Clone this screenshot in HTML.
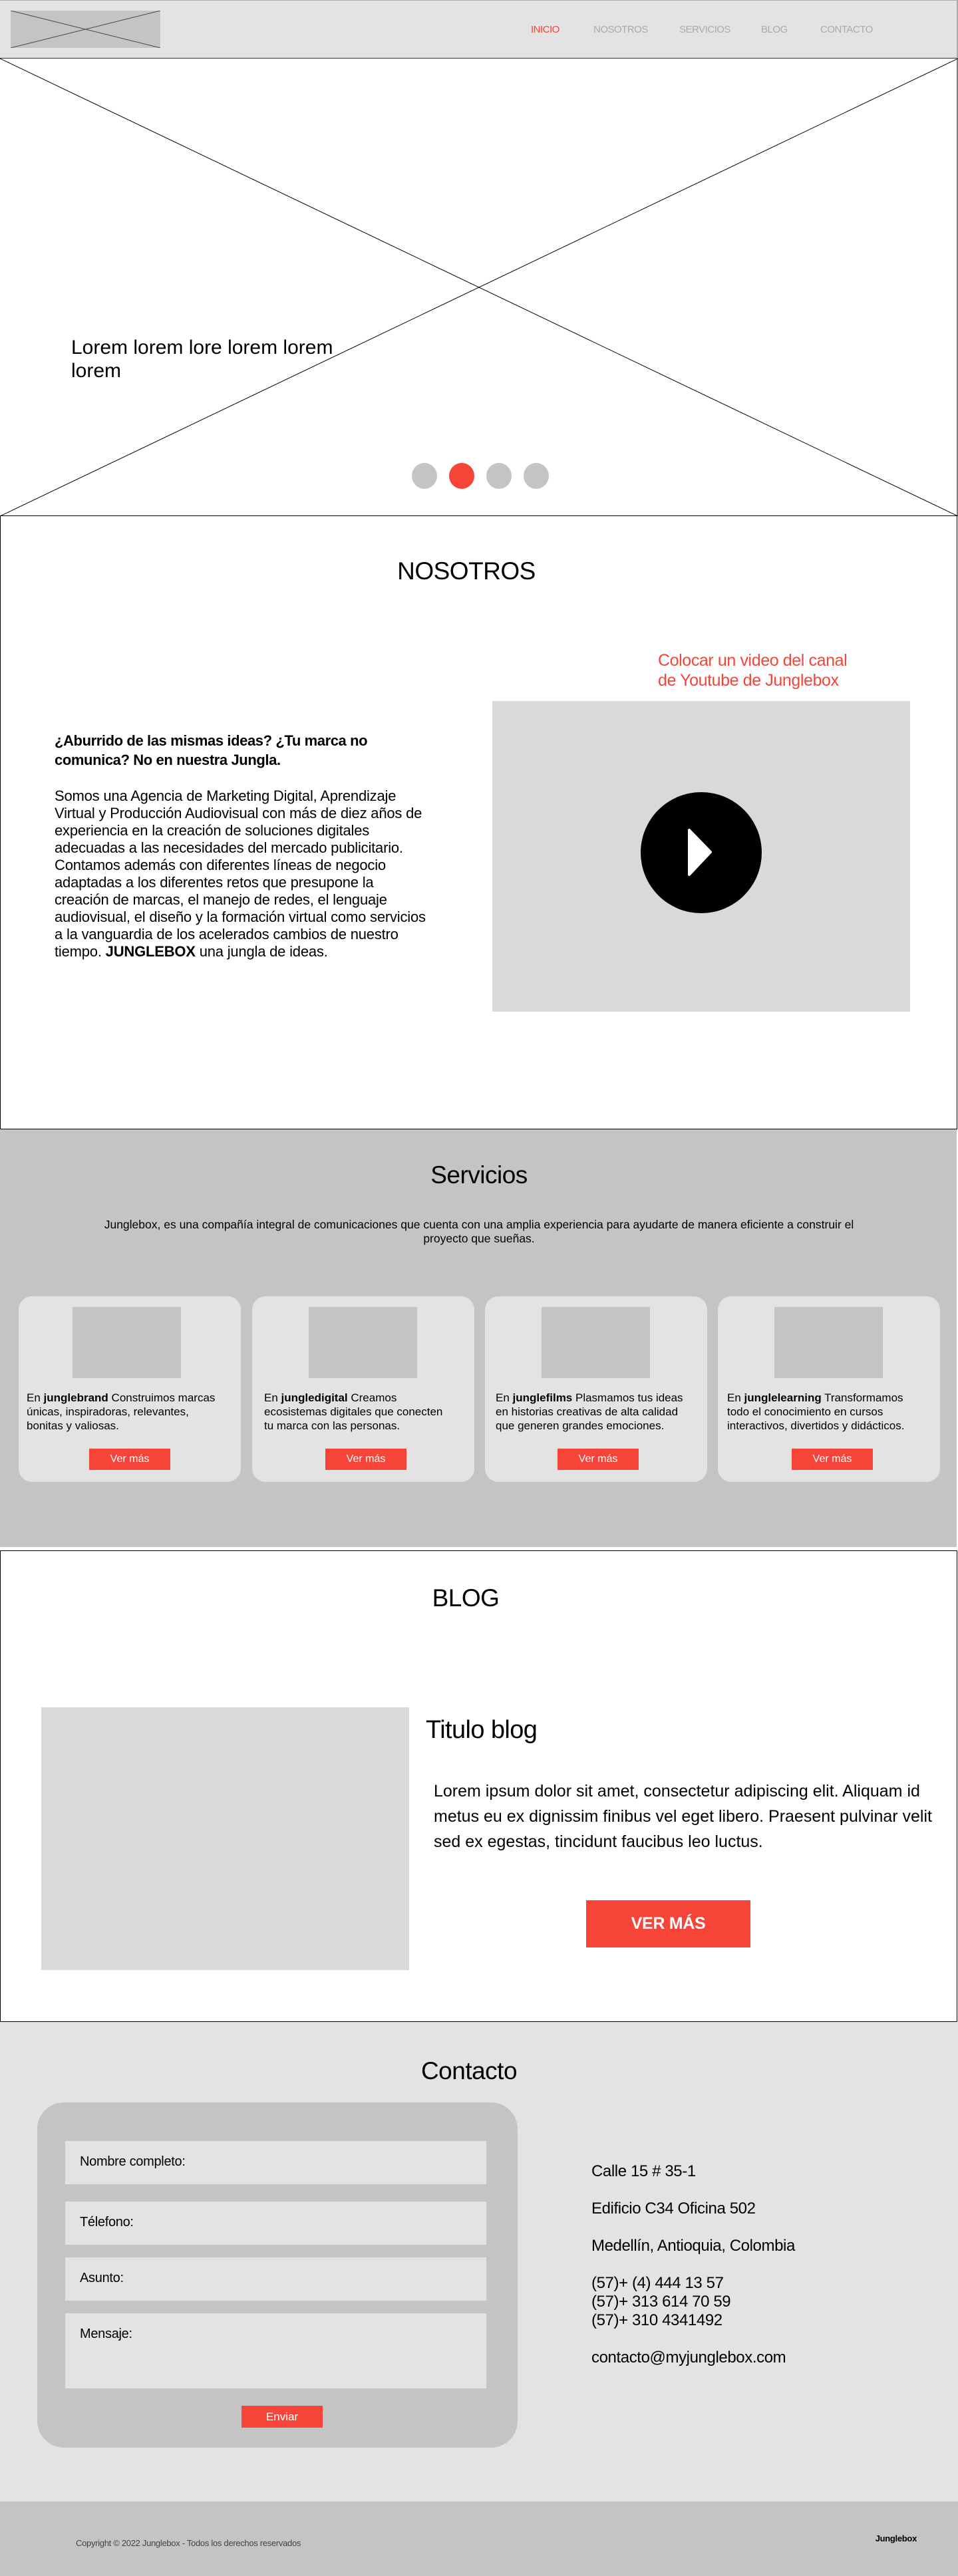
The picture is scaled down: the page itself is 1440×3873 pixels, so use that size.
<!DOCTYPE html>
<html><head><meta charset="utf-8"><style>
*{margin:0;padding:0;box-sizing:border-box}
body{width:1440px;height:3873px;position:relative;background:#fff;font-family:"Liberation Sans",sans-serif;color:#000;overflow:hidden}
.a{position:absolute}
.nw{white-space:nowrap}
.red{background:#f64438;color:#fff;text-align:center}
</style></head><body>
<!-- header -->
<div class="a" style="left:0;top:0;width:1440px;height:88px;background:#e3e3e3;border-top:1px solid #aaa;border-right:2px solid #aaa;border-bottom:1px solid #333"></div>
<svg class="a" style="left:16px;top:16px" width="225" height="56"><rect x="0" y="0" width="225" height="56" fill="#c4c4c4"/><line x1="0" y1="0" x2="225" y2="56" stroke="#444" stroke-width="1"/><line x1="225" y1="0" x2="0" y2="56" stroke="#444" stroke-width="1"/></svg>
<div class="a nw" style="top:36px;left:798px;font-size:15px;color:#f64438;letter-spacing:-0.5px">INICIO</div>
<div class="a nw" style="top:36px;left:892px;font-size:15px;color:#aaa;letter-spacing:-0.5px">NOSOTROS</div>
<div class="a nw" style="top:36px;left:1021px;font-size:15px;color:#aaa;letter-spacing:-0.5px">SERVICIOS</div>
<div class="a nw" style="top:36px;left:1144px;font-size:15px;color:#aaa;letter-spacing:-0.5px">BLOG</div>
<div class="a nw" style="top:36px;left:1233px;font-size:15px;color:#aaa;letter-spacing:-0.5px">CONTACTO</div>
<!-- hero -->
<svg class="a" style="left:0;top:88px" width="1440" height="688" preserveAspectRatio="none"><line x1="0" y1="0" x2="1440" y2="688" stroke="#000" stroke-width="1"/><line x1="1440" y1="0" x2="0" y2="688" stroke="#000" stroke-width="1"/><line x1="1439" y1="0" x2="1439" y2="688" stroke="#000"/></svg>
<div class="a nw" style="left:107px;top:505px;font-size:30px;line-height:35px;letter-spacing:0">Lorem lorem lore lorem lorem<br>lorem</div>
<div class="a" style="left:619px;top:696px;width:38px;height:39px;border-radius:50%;background:#c4c4c4"></div>
<div class="a" style="left:675px;top:696px;width:38px;height:39px;border-radius:50%;background:#f64438"></div>
<div class="a" style="left:731px;top:696px;width:38px;height:39px;border-radius:50%;background:#c4c4c4"></div>
<div class="a" style="left:787px;top:696px;width:38px;height:39px;border-radius:50%;background:#c4c4c4"></div>
<!-- nosotros -->
<div class="a" style="left:0;top:775px;width:1439px;height:923px;border:1.5px solid #000"></div>
<div class="a nw" style="left:0;width:1402px;text-align:center;top:838px;font-size:37px;letter-spacing:-0.5px">NOSOTROS</div>
<div class="a nw" style="left:989px;top:978px;font-size:25px;line-height:30px;color:#f64438;letter-spacing:-0.4px">Colocar un video del canal<br>de Youtube de Junglebox</div>
<div class="a nw" style="left:82px;top:1099px;font-size:22px;line-height:29px;font-weight:bold;letter-spacing:-0.4px">¿Aburrido de las mismas ideas? ¿Tu marca no<br>comunica? No en nuestra Jungla.</div>
<div class="a nw" style="left:82px;top:1184px;font-size:22px;line-height:26px;letter-spacing:-0.2px">Somos una Agencia de Marketing Digital, Aprendizaje<br>Virtual y Producción Audiovisual con más de diez años de<br>experiencia en la creación de soluciones digitales<br>adecuadas a las necesidades del mercado publicitario.<br>Contamos además con diferentes líneas de negocio<br>adaptadas a los diferentes retos que presupone la<br>creación de marcas, el manejo de redes, el lenguaje<br>audiovisual, el diseño y la formación virtual como servicios<br>a la vanguardia de los acelerados cambios de nuestro<br>tiempo. <b>JUNGLEBOX</b> una jungla de ideas.</div>
<div class="a" style="left:740px;top:1054px;width:628px;height:467px;background:#d9d9d9"></div>
<svg class="a" style="left:963px;top:1191px" width="182" height="182"><circle cx="91" cy="91" r="91" fill="#000"/><path d="M73 57 L73 124 L105 90 Z" fill="#fff" stroke="#fff" stroke-width="4" stroke-linejoin="round"/></svg>
<!-- servicios -->
<div class="a" style="left:0;top:1698px;width:1438px;height:628px;background:#c4c4c4"></div>
<div class="a nw" style="left:0;width:1440px;text-align:center;top:1746px;font-size:37px;letter-spacing:-0.5px">Servicios</div>
<div class="a" style="left:135px;width:1170px;text-align:center;top:1831px;font-size:17.5px;line-height:21px">Junglebox, es una compañía integral de comunicaciones que cuenta con una amplia experiencia para ayudarte de manera eficiente a construir el proyecto que sueñas.</div>

<div class="a" style="left:28px;top:1949px;width:334px;height:279px;background:#e3e3e3;border-radius:20px"></div>
<div class="a" style="left:109px;top:1965px;width:163px;height:107px;background:#c4c4c4"></div>
<div class="a nw" style="left:40px;top:2091px;font-size:17px;line-height:21px">En <b>junglebrand</b> Construimos marcas<br>únicas, inspiradoras, relevantes,<br>bonitas y valiosas.</div>
<div class="a red" style="left:134px;top:2178px;width:122px;height:32px;font-size:16px;line-height:32px">Ver más</div>

<div class="a" style="left:379px;top:1949px;width:334px;height:279px;background:#e3e3e3;border-radius:20px"></div>
<div class="a" style="left:464px;top:1965px;width:163px;height:107px;background:#c4c4c4"></div>
<div class="a nw" style="left:397px;top:2091px;font-size:17px;line-height:21px">En <b>jungledigital</b> Creamos<br>ecosistemas digitales que conecten<br>tu marca con las personas.</div>
<div class="a red" style="left:489px;top:2178px;width:122px;height:32px;font-size:16px;line-height:32px">Ver más</div>

<div class="a" style="left:729px;top:1949px;width:334px;height:279px;background:#e3e3e3;border-radius:20px"></div>
<div class="a" style="left:814px;top:1965px;width:163px;height:107px;background:#c4c4c4"></div>
<div class="a nw" style="left:745px;top:2091px;font-size:17px;line-height:21px">En <b>junglefilms</b> Plasmamos tus ideas<br>en historias creativas de alta calidad<br>que generen grandes emociones.</div>
<div class="a red" style="left:838px;top:2178px;width:122px;height:32px;font-size:16px;line-height:32px">Ver más</div>

<div class="a" style="left:1079px;top:1949px;width:334px;height:279px;background:#e3e3e3;border-radius:20px"></div>
<div class="a" style="left:1164px;top:1965px;width:163px;height:107px;background:#c4c4c4"></div>
<div class="a nw" style="left:1093px;top:2091px;font-size:17px;line-height:21px">En <b>junglelearning</b> Transformamos<br>todo el conocimiento en cursos<br>interactivos, divertidos y didácticos.</div>
<div class="a red" style="left:1190px;top:2178px;width:122px;height:32px;font-size:16px;line-height:32px">Ver más</div>
<!-- blog -->
<div class="a" style="left:0;top:2331px;width:1439px;height:709px;border:1.5px solid #000"></div>
<div class="a nw" style="left:0;width:1400px;text-align:center;top:2382px;font-size:37px;letter-spacing:-0.5px">BLOG</div>
<div class="a" style="left:62px;top:2567px;width:553px;height:395px;background:#d9d9d9"></div>
<div class="a nw" style="left:640px;top:2580px;font-size:38px;letter-spacing:-0.6px">Titulo blog</div>
<div class="a nw" style="left:652px;top:2674px;font-size:25px;line-height:38px;letter-spacing:0">Lorem ipsum dolor sit amet, consectetur adipiscing elit. Aliquam id<br>metus eu ex dignissim finibus vel eget libero. Praesent pulvinar velit<br>sed ex egestas, tincidunt faucibus leo luctus.</div>
<div class="a red" style="left:881px;top:2857px;width:247px;height:71px;font-size:25px;line-height:71px;font-weight:bold;letter-spacing:-0.3px">VER MÁS</div>
<!-- contacto -->
<div class="a" style="left:0;top:3040px;width:1440px;height:721px;background:#e3e3e3"></div>
<div class="a nw" style="left:0;width:1410px;text-align:center;top:3093px;font-size:37px;letter-spacing:-0.5px">Contacto</div>
<div class="a" style="left:56px;top:3161px;width:722px;height:519px;background:#c4c4c4;border-radius:40px"></div>
<div class="a" style="left:98px;top:3219px;width:633px;height:65px;background:#e3e3e3"></div>
<div class="a nw" style="left:120px;top:3239px;font-size:20px;letter-spacing:-0.3px">Nombre completo:</div>
<div class="a" style="left:98px;top:3310px;width:633px;height:65px;background:#e3e3e3"></div>
<div class="a nw" style="left:120px;top:3330px;font-size:20px;letter-spacing:-0.3px">Télefono:</div>
<div class="a" style="left:98px;top:3394px;width:633px;height:65px;background:#e3e3e3"></div>
<div class="a nw" style="left:120px;top:3414px;font-size:20px;letter-spacing:-0.3px">Asunto:</div>
<div class="a" style="left:98px;top:3478px;width:633px;height:113px;background:#e3e3e3"></div>
<div class="a nw" style="left:120px;top:3498px;font-size:20px;letter-spacing:-0.3px">Mensaje:</div>
<div class="a red" style="left:363px;top:3617px;width:122px;height:33px;font-size:17px;line-height:33px">Enviar</div>
<div class="a nw" style="left:889px;top:3251px;font-size:24px;letter-spacing:-0.4px">Calle 15 # 35-1</div>
<div class="a nw" style="left:889px;top:3307px;font-size:24px;letter-spacing:-0.4px">Edificio C34 Oficina 502</div>
<div class="a nw" style="left:889px;top:3363px;font-size:24px;letter-spacing:-0.4px">Medellín, Antioquia, Colombia</div>
<div class="a nw" style="left:889px;top:3419px;font-size:24px;line-height:28px;letter-spacing:-0.4px">(57)+ (4) 444 13 57<br>(57)+ 313 614 70 59<br>(57)+ 310 4341492</div>
<div class="a nw" style="left:889px;top:3531px;font-size:24px;letter-spacing:-0.4px">contacto@myjunglebox.com</div>
<!-- footer -->
<div class="a" style="left:0;top:3761px;width:1440px;height:112px;background:#c4c4c4"></div>
<div class="a nw" style="left:114px;top:3816px;font-size:13px;color:#444;letter-spacing:-0.3px">Copyright © 2022 Junglebox - Todos los derechos reservados</div>
<div class="a nw" style="left:1310px;width:68px;text-align:right;top:3809px;font-size:13px;font-weight:bold;letter-spacing:-0.3px">Junglebox</div>
</body></html>
